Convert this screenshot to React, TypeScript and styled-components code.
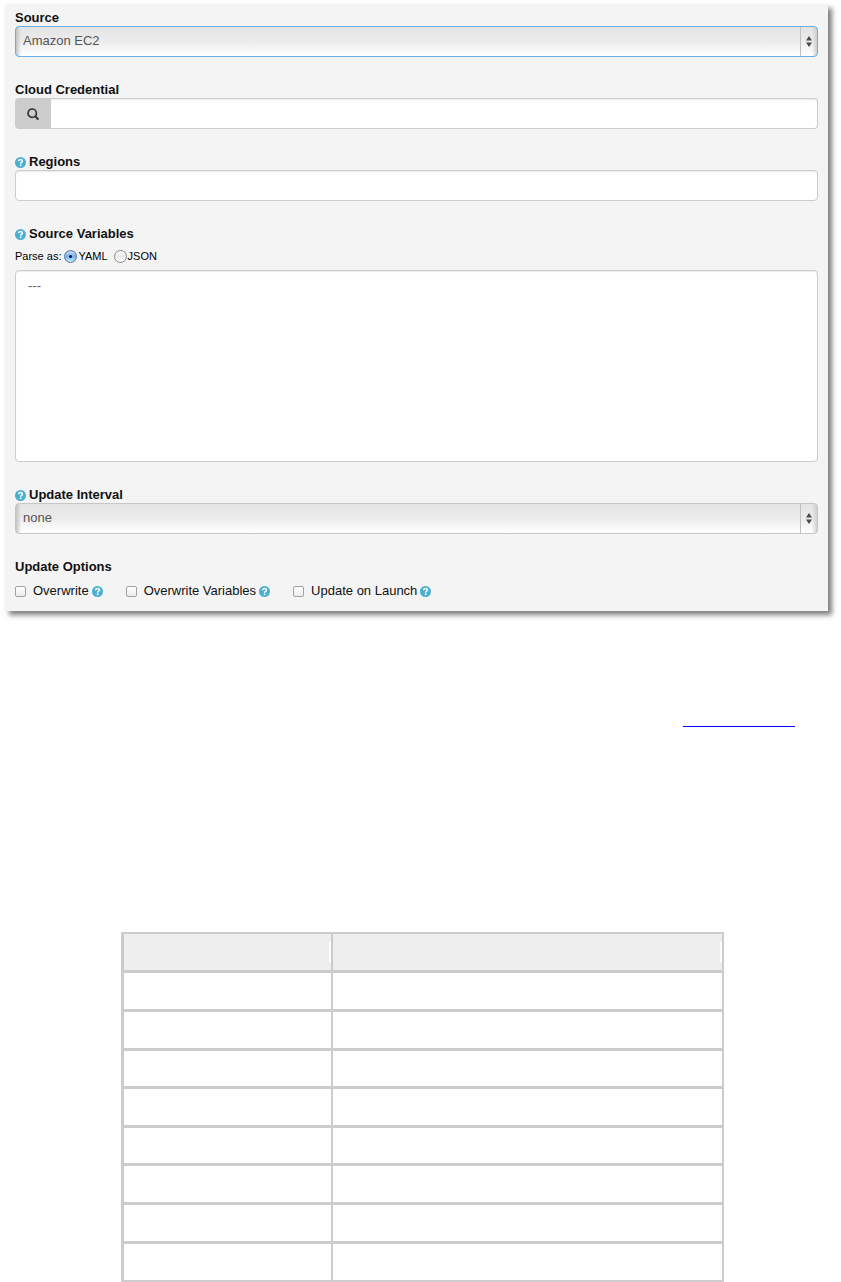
import React from "react";
import styled, { createGlobalStyle } from "styled-components";

const GlobalStyle = createGlobalStyle`
  *, *::before, *::after { box-sizing: border-box; }
  body {
    margin: 0;
    background: #fff;
    color: #111;
    font-family: "Liberation Sans", Arial, Helvetica, sans-serif;
    font-size: 13px;
  }
`;

const Page = styled.main`
  display: flex;
  flex-direction: column;
  padding-top: 4px;
`;

const Panel = styled.form`
  display: flex;
  flex-direction: column;
  gap: 23px;
  margin: 0 13px 0 5px;
  padding: 4px 10px 11px;
  background: #f4f4f4;
  box-shadow: 4px 4px 5px rgba(0, 0, 0, 0.5);
`;

const Field = styled.div`
  display: flex;
  flex-direction: column;
`;

const LabelRow = styled.div`
  display: flex;
  align-items: center;
  gap: 3px;
  height: 18px;
  padding-top: 2px;
  line-height: 16px;
  font-weight: bold;
`;

const SelectBox = styled.div`
  position: relative;
  display: flex;
`;

const Select = styled.select<{ $active?: boolean }>`
  appearance: none;
  width: 100%;
  height: 31px;
  padding: 0 26px 2px 7px;
  border: 1px solid ${(p) => (p.$active ? "#66afe9" : "#c6c6c6")};
  border-radius: 4px;
  background: linear-gradient(to right, #c4c4c4, transparent 5px),
    linear-gradient(to left, #cfcfcf, transparent 5px),
    linear-gradient(#e4e4e4, #ececec 50%, #fff);
  color: #555;
  font: inherit;
  outline: none;
`;

const Stepper = styled.span`
  position: absolute;
  top: 1px;
  right: 1px;
  bottom: 1px;
  display: flex;
  align-items: center;
  justify-content: center;
  width: 17px;
  border-left: 1px solid #c0c0c0;
  pointer-events: none;
`;

const Input = styled.input`
  width: 100%;
  min-width: 0;
  height: 31px;
  padding: 0 8px;
  border: 1px solid #ccc;
  border-radius: 4px;
  background: #fff;
  box-shadow: inset 0 1px 1px rgba(0, 0, 0, 0.08);
  font: inherit;
  outline: none;
`;

const InputGroup = styled.div`
  display: flex;
  ${Input} {
    border-left: 0;
    border-radius: 0 4px 4px 0;
  }
`;

const LookupButton = styled.button`
  display: flex;
  flex: none;
  align-items: center;
  justify-content: center;
  width: 36px;
  height: 31px;
  padding: 0;
  border: 0;
  border-radius: 4px 0 0 4px;
  background: #ccc;
`;

const ParseRow = styled.div`
  display: flex;
  align-items: center;
  gap: 3px;
  height: 28px;
  font-size: 11px;
  color: #000;
`;

const RadioGroup = styled.div`
  display: flex;
  gap: 6px;
`;

const RadioLabel = styled.label`
  display: flex;
  align-items: center;
  gap: 1px;
`;

const Radio = styled.input`
  appearance: none;
  width: 13px;
  height: 13px;
  margin: 0;
  border: 1px solid #8a8a8a;
  border-radius: 50%;
  background: linear-gradient(#fff, #e8e8e8 50%, #fff);
  &:checked {
    border-color: #5470a8;
    background: radial-gradient(circle, #0c1c3c 1px, transparent 2px),
      linear-gradient(#c5dcf6, #78b2ee 50%, #c4ecff);
  }
`;

const TextArea = styled.textarea`
  height: 192px;
  padding: 6px 12px;
  border: 1px solid #ccc;
  border-radius: 4px;
  background: #fff;
  box-shadow: inset 0 1px 1px rgba(0, 0, 0, 0.08);
  color: #666;
  font: inherit;
  line-height: 18px;
  resize: none;
  outline: none;
`;

const Options = styled.div`
  display: flex;
  flex-wrap: wrap;
  align-items: center;
  gap: 23px;
  padding-top: 7px;
`;

const Option = styled.div`
  display: flex;
  align-items: center;
  gap: 3px;
`;

const CheckLabel = styled.label`
  display: flex;
  align-items: center;
  gap: 7px;
  line-height: 18px;
`;

const Checkbox = styled.input`
  appearance: none;
  width: 11px;
  height: 11px;
  margin: 0;
  border: 1px solid #a2a2a2;
  border-radius: 2px;
  background: linear-gradient(#fff, #ececec);
  &:checked {
    background: #4aacd0;
  }
`;

const Icon = styled.svg`
  display: block;
  flex: none;
`;

const Paragraph = styled.p`
  display: flex;
  justify-content: flex-end;
  margin: 98px 46px 0 0;
`;

const Link = styled.a`
  width: 112px;
  height: 18px;
  border-bottom: 1px solid #00f;
`;

const Table = styled.table`
  width: 603px;
  max-width: 100%;
  margin: 205px auto 0 121px;
  border: 2px solid #ccc;
  border-left-width: 3px;
  border-collapse: separate;
  border-spacing: 0;
  table-layout: fixed;
`;

const HeadCell = styled.th<{ $name?: boolean }>`
  width: ${(p) => (p.$name ? "209px" : "auto")};
  height: 39px;
  padding: 0;
  border-bottom: 3px solid #ccc;
  border-right: ${(p) => (p.$name ? "2px solid #ccc" : "0")};
  background: linear-gradient(#fff, #fff) right 8px / 2px 20px no-repeat #eee;
  background-origin: padding-box;
`;

const Row = styled.tr<{ $height: number }>`
  height: ${(p) => p.$height}px;
  &:last-child td {
    border-bottom: 0;
  }
`;

const Cell = styled.td`
  padding: 0;
  border-bottom: 3px solid #ccc;
  &:first-child {
    border-right: 2px solid #ccc;
  }
`;

const HelpIcon = () => (
  <Icon width="11" height="11" viewBox="0 0 22 22" aria-hidden="true">
    <circle cx="11" cy="11" r="11" fill="#4aaed2" />
    <path
      d="M7.2 8.4C7.4 3.8 15 3.9 14.8 8.3c-.1 2.6-3.6 2.5-3.6 5.2"
      fill="none"
      stroke="#fff"
      strokeWidth="3"
    />
    <rect x="9.6" y="15" width="3.2" height="3.2" fill="#fff" />
  </Icon>
);

const SearchIcon = () => (
  <Icon width="12" height="12" viewBox="0 0 12 12" aria-hidden="true">
    <circle cx="5.2" cy="5.2" r="4.2" fill="none" stroke="#333" strokeWidth="1.7" />
    <path d="M8.4 8.4l2.4 2.6" stroke="#333" strokeWidth="2" strokeLinecap="round" />
  </Icon>
);

const Arrows = () => (
  <Stepper>
    <Icon width="6" height="11" viewBox="0 0 6 11" aria-hidden="true">
      <path d="M3 0l3 4.5H0zM3 11l3-4.5H0z" fill="#4a4a4a" />
    </Icon>
  </Stepper>
);

const options = ["Overwrite", "Overwrite Variables", "Update on Launch"];
const rowHeights = [39, 39, 38, 39, 38, 39, 39, 36];

export default function App() {
  return (
    <Page>
      <GlobalStyle />
      <Panel>
        <Field>
          <LabelRow>
            <label htmlFor="source">Source</label>
          </LabelRow>
          <SelectBox>
            <Select id="source" $active>
              <option>Amazon EC2</option>
            </Select>
            <Arrows />
          </SelectBox>
        </Field>
        <Field>
          <LabelRow>
            <label htmlFor="credential">Cloud Credential</label>
          </LabelRow>
          <InputGroup>
            <LookupButton type="button">
              <SearchIcon />
            </LookupButton>
            <Input id="credential" type="text" />
          </InputGroup>
        </Field>
        <Field>
          <LabelRow>
            <HelpIcon />
            <label htmlFor="regions">Regions</label>
          </LabelRow>
          <Input id="regions" type="text" />
        </Field>
        <Field>
          <LabelRow>
            <HelpIcon />
            <label htmlFor="variables">Source Variables</label>
          </LabelRow>
          <ParseRow>
            <span>Parse as:</span>
            <RadioGroup>
              <RadioLabel>
                <Radio type="radio" name="parse" defaultChecked />
                YAML
              </RadioLabel>
              <RadioLabel>
                <Radio type="radio" name="parse" />
                JSON
              </RadioLabel>
            </RadioGroup>
          </ParseRow>
          <TextArea id="variables" defaultValue="---" />
        </Field>
        <Field>
          <LabelRow>
            <HelpIcon />
            <label htmlFor="interval">Update Interval</label>
          </LabelRow>
          <SelectBox>
            <Select id="interval">
              <option>none</option>
            </Select>
            <Arrows />
          </SelectBox>
        </Field>
        <Field>
          <LabelRow>Update Options</LabelRow>
          <Options>
            {options.map((name) => (
              <Option key={name}>
                <CheckLabel>
                  <Checkbox type="checkbox" />
                  {name}
                </CheckLabel>
                <HelpIcon />
              </Option>
            ))}
          </Options>
        </Field>
      </Panel>
      <Paragraph>
        <Link href="#" />
      </Paragraph>
      <Table>
        <thead>
          <tr>
            <HeadCell $name />
            <HeadCell />
          </tr>
        </thead>
        <tbody>
          {rowHeights.map((height, index) => (
            <Row key={index} $height={height}>
              <Cell />
              <Cell />
            </Row>
          ))}
        </tbody>
      </Table>
    </Page>
  );
}
